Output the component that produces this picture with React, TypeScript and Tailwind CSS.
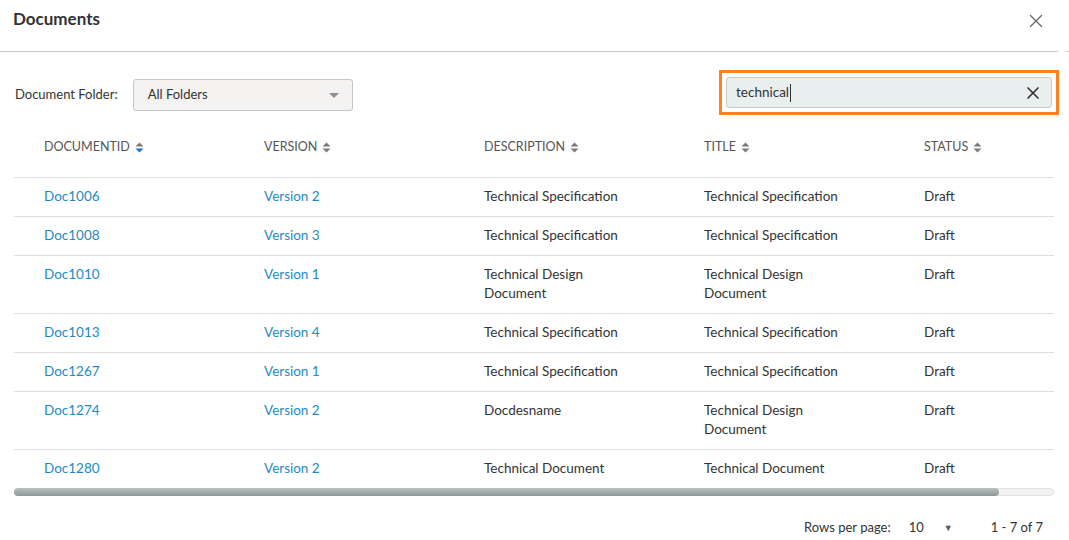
import { X } from "lucide-react";

const rows = [
  { id: "Doc1006", version: "Version 2", description: "Technical Specification", title: "Technical Specification", status: "Draft" },
  { id: "Doc1008", version: "Version 3", description: "Technical Specification", title: "Technical Specification", status: "Draft" },
  { id: "Doc1010", version: "Version 1", description: "Technical Design Document", title: "Technical Design Document", status: "Draft" },
  { id: "Doc1013", version: "Version 4", description: "Technical Specification", title: "Technical Specification", status: "Draft" },
  { id: "Doc1267", version: "Version 1", description: "Technical Specification", title: "Technical Specification", status: "Draft" },
  { id: "Doc1274", version: "Version 2", description: "Docdesname", title: "Technical Design Document", status: "Draft" },
  { id: "Doc1280", version: "Version 2", description: "Technical Document", title: "Technical Document", status: "Draft" },
];

const columns = ["DOCUMENTID", "VERSION", "DESCRIPTION", "TITLE", "STATUS"];

function SortIcon({ active }: { active?: boolean }) {
  return (
    <svg width="9" height="11" viewBox="0 0 9 11" className="ml-[5px] inline-block">
      <path d="M4.5 0.5 L8.5 4.5 H0.5 Z" fill="#7a7a7a" />
      <path d="M4.5 10.5 L8.5 6.5 H0.5 Z" fill={active ? "#1f6fd1" : "#7a7a7a"} />
    </svg>
  );
}

export default function App() {
  return (
    <div className="h-[540px] w-[1069px] overflow-hidden bg-white text-[#333] [font-family:Lato,'Liberation_Sans',sans-serif]">
      <div className="flex h-[51px] items-center justify-between pl-[13px] pr-[22px]">
        <h1 className="-mt-[13px] text-[17px] font-bold text-[#333]">Documents</h1>
        <button type="button" className="-mt-[9px] text-[#666]">
          <X className="h-[22px] w-[22px]" strokeWidth={1.4} />
        </button>
      </div>
      <div className="flex items-center">
        <div className="h-px w-[1058px] bg-[#c8c8c8]" />
        <div className="ml-[8px] h-px w-[3px] bg-[#c8c8c8]" />
      </div>

      <div className="mt-[18px] flex items-start justify-between pl-[15px] pr-[10px]">
        <div className="mt-[9px] flex items-center">
          <span className="text-[13px] text-[#333]">Document Folder:</span>
          <div className="ml-[15px] flex h-[32px] w-[220px] items-center justify-between rounded-[3px] border border-[#c4c4c4] bg-[#f4f3f2] pl-[14px] pr-[13px] text-[13px]">
            <span>All Folders</span>
            <svg width="10" height="5" viewBox="0 0 10 5">
              <path d="M0 0 H10 L5 5 Z" fill="#8a8f94" />
            </svg>
          </div>
        </div>
        <div className="h-[45px] w-[340px] border-[3px] border-[#ff7f22] p-[4px]">
          <div className="flex h-full items-center justify-between rounded-[3px] border border-[#c5cccb] bg-[#e8efee] pl-[9px] pr-[8px]">
            <span className="flex items-center text-[13.5px] text-[#333]">
              technical
              <span className="ml-px h-[18px] w-px bg-[#333]" />
            </span>
            <X className="h-[20px] w-[20px] text-[#333]" strokeWidth={2} />
          </div>
        </div>
      </div>

      <div className="ml-[14px] mt-[6px] w-[1040px] overflow-hidden">
        <div className="w-[1100px]">
          <div className="flex h-[57px] items-center border-b border-[#dedede] pb-[4px] text-[12.5px] text-[#555]">
            {columns.map((c, i) => (
              <div key={c} className="flex w-[220px] items-center pl-[30px]">
                {c}
                <SortIcon active={i === 0} />
              </div>
            ))}
          </div>
          {rows.map((r) => (
            <div key={r.id} className="flex border-b border-[#dedede] text-[13.5px] leading-[19px] last:border-b-0">
              <div className="w-[220px] pb-[10px] pl-[30px] pr-[40px] pt-[9px] text-[#1b8bc4]">{r.id}</div>
              <div className="w-[220px] pb-[10px] pl-[30px] pr-[40px] pt-[9px] text-[#1b8bc4]">{r.version}</div>
              <div className="w-[220px] pb-[10px] pl-[30px] pr-[40px] pt-[9px]">{r.description}</div>
              <div className="w-[220px] pb-[10px] pl-[30px] pr-[40px] pt-[9px]">{r.title}</div>
              <div className="w-[220px] pb-[10px] pl-[30px] pr-[40px] pt-[9px]">{r.status}</div>
            </div>
          ))}
        </div>
        <div className="h-[8px] w-[1040px] rounded-full border border-[#e2e2e2] bg-[#f2f2f2]">
          <div className="-m-px h-[8px] w-[985px] rounded-full bg-gradient-to-b from-[#b9c2c2] via-[#a2acac] to-[#8e9898]" />
        </div>
      </div>

      <div className="mt-[22px] flex items-center justify-end pr-[26px] text-[13px] text-[#333]">
        <span>Rows per page:</span>
        <span className="ml-[18px]">10</span>
        <span className="ml-[20px] text-[9px] text-[#555]">▼</span>
        <span className="ml-[38px]">1 - 7 of 7</span>
      </div>
    </div>
  );
}
